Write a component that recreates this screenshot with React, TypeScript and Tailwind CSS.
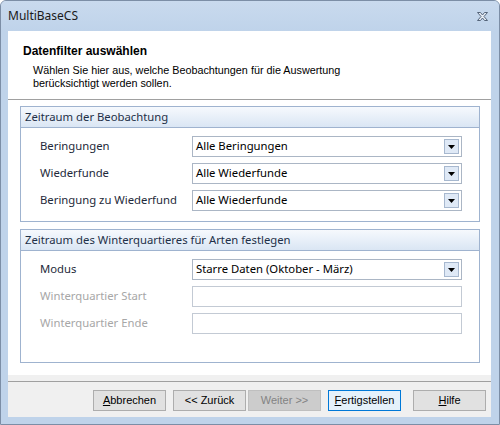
import React from 'react';

const ui = { fontFamily: '"Liberation Sans", Arial, sans-serif' };
const seg = { fontFamily: '"Noto Sans", "Open Sans", sans-serif' };

const Arrow = () => (
  <div className="w-[15px] h-[15px] mr-[2px] border border-[#a7b8cf] bg-[#dfe9f6] flex items-center justify-center">
    <svg width="7" height="4" viewBox="0 0 7 4">
      <path d="M0 0h7L3.5 4z" fill="#000" />
    </svg>
  </div>
);

const Select = ({ value }: { value: string }) => (
  <div className="w-[270px] h-[21px] border border-[#abb6c5] bg-white flex items-center justify-between pl-[3px]">
    <span className="text-[11.3px] text-black" style={seg}>{value}</span>
    <Arrow />
  </div>
);

const Input = () => <div className="w-[270px] h-[21px] border border-[#c3cad4] bg-white" />;

const Row = ({ label, disabled, children }: { label: string; disabled?: boolean; children: React.ReactNode }) => (
  <div className="flex items-center h-[21px]">
    <span className={`w-[152px] text-[11.3px] ${disabled ? 'text-[#a7a7a7]' : 'text-[#1e2a3a]'}`} style={seg}>{label}</span>
    {children}
  </div>
);

const Group = ({ title, className, children }: { title: string; className: string; children: React.ReactNode }) => (
  <div className={`border border-[#9fb3cf] bg-white flex flex-col ${className}`}>
    <div className="h-[21px] border-b border-[#9fb3cf] bg-gradient-to-b from-[#f6f9fd] to-[#dae6f4] flex items-center pl-[4px]">
      <span className="text-[11.3px] text-[#1e3048]" style={seg}>{title}</span>
    </div>
    {children}
  </div>
);

const Btn = ({ children, variant }: { children: React.ReactNode; variant?: 'default' | 'disabled' }) => {
  const cls =
    variant === 'default'
      ? 'border-[#0078d7] bg-[#e5f1fb] text-black'
      : variant === 'disabled'
      ? 'border-[#bfbfbf] bg-[#cccccc] text-[#838383]'
      : 'border-[#adadad] bg-[#e1e1e1] text-black';
  return (
    <div className={`w-[73px] h-[21px] border flex items-center justify-center text-[11px] ${cls}`} style={ui}>
      {children}
    </div>
  );
};

export default function App() {
  return (
    <div className="w-[500px] h-[425px] bg-[#bfd3ea] border border-[#7c8ea6] rounded-t-[6px] flex flex-col overflow-hidden" style={ui}>
      {/* title bar */}
      <div className="h-[30px] flex items-center justify-between pl-[7px] pr-[10px] bg-gradient-to-b from-[#c9daee] to-[#bfd3ea]">
        <span className="text-[12px] text-[#1a1a1a]" style={seg}>MultiBaseCS</span>
        <svg width="13" height="11" viewBox="0 0 13 11">
          <path
            d="M1.5 1.5h3l2 2.5 2-2.5h3l-3.5 4 3.5 4h-3l-2-2.5-2 2.5h-3l3.5-4z"
            fill="#e8eef6"
            stroke="#55657a"
            strokeWidth="1"
            strokeLinejoin="round"
          />
        </svg>
      </div>

      {/* client */}
      <div className="mx-[7px] w-[483px] h-[386px] flex flex-col bg-white">
        <div className="h-[69px] bg-white border-b border-[#a0a0a0] pl-[15px] pt-[11px]">
          <div className="text-[12px] font-bold text-black" style={ui}>Datenfilter auswählen</div>
          <div className="pl-[10px] pt-[4px] text-[10.8px] leading-[13px] text-black" style={ui}>
            Wählen Sie hier aus, welche Beobachtungen für die Auswertung
            <br />
            berücksichtigt werden sollen.
          </div>
        </div>

        <div className="flex-1 bg-white pl-[12px] pr-[11px] pt-[6px] flex flex-col gap-[7px]">
          <Group title="Zeitraum der Beobachtung" className="h-[116px]">
            <div className="pl-[19px] pt-[8px] flex flex-col gap-[6px]">
              <Row label="Beringungen"><Select value="Alle Beringungen" /></Row>
              <Row label="Wiederfunde"><Select value="Alle Wiederfunde" /></Row>
              <Row label="Beringung zu Wiederfund"><Select value="Alle Wiederfunde" /></Row>
            </div>
          </Group>
          <Group title="Zeitraum des Winterquartieres für Arten festlegen" className="h-[134px]">
            <div className="pl-[19px] pt-[8px] flex flex-col gap-[6px]">
              <Row label="Modus"><Select value="Starre Daten (Oktober - März)" /></Row>
              <Row label="Winterquartier Start" disabled><Input /></Row>
              <Row label="Winterquartier Ende" disabled><Input /></Row>
            </div>
          </Group>
        </div>

        <div className="h-[6px] bg-[#f0f0f0]" />
        <div className="h-[36px] bg-[#f0f0f0] border-t border-[#a0a0a0] flex items-start pt-[8px] pl-[85px] gap-[7px]">
          <Btn><span><u>A</u>bbrechen</span></Btn>
          <div className="flex gap-[2px]">
            <Btn>&lt;&lt; Zurück</Btn>
            <Btn variant="disabled">Weiter &gt;&gt;</Btn>
          </div>
          <Btn variant="default"><span><u>F</u>ertigstellen</span></Btn>
          <div className="ml-[5px]">
            <Btn><span><u>H</u>ilfe</span></Btn>
          </div>
        </div>
      </div>
    </div>
  );
}
